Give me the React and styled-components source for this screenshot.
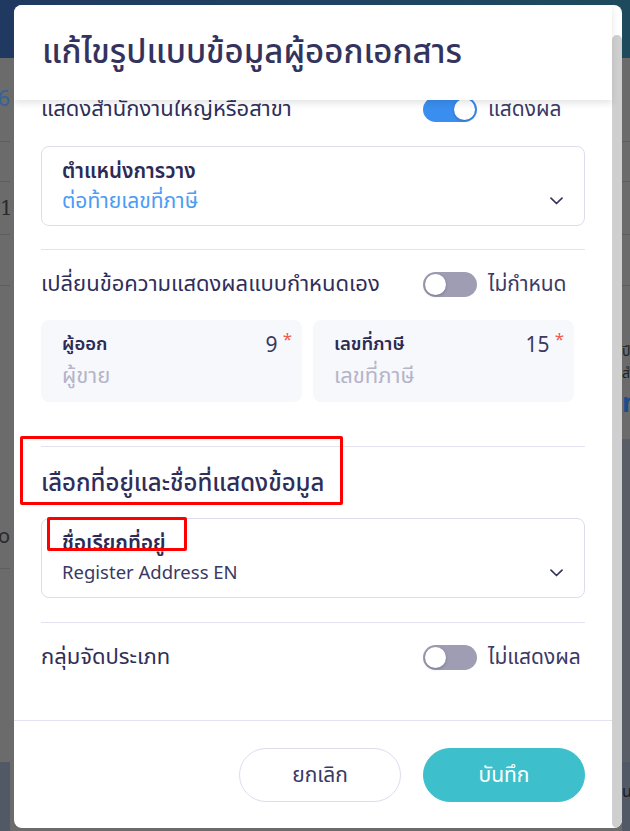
import React from "react";
import styled, { createGlobalStyle } from "styled-components";

const GlobalStyle = createGlobalStyle`
  html, body { margin: 0; padding: 0; }
  body {
    background: #6b6b6b;
    font-family: "Noto Sans Thai", "Noto Sans", "Liberation Sans", sans-serif;
  }
  * { box-sizing: border-box; }
`;

/* ---------- underlying page (dimmed by overlay) ---------- */
const Page = styled.div`
  position: relative;
  width: 630px;
  height: 831px;
  overflow: hidden;
  background: #6b6b6b;
  display: flex;
  flex-direction: column;
`;

const TopBar = styled.div`
  flex: none;
  height: 58px;
  background: linear-gradient(90deg, #1f3961 0%, #1f4361 55%, #1d4b5d 100%);
`;

const PageBody = styled.div`
  flex: 1;
  display: flex;
  justify-content: space-between;
`;

const Strip = styled.div`
  width: ${(p) => p.$w}px;
  display: flex;
  flex-direction: column;
  overflow: hidden;
`;

const StripCell = styled.div`
  flex: ${(p) => (p.$grow ? "1" : "none")};
  height: ${(p) => (p.$h ? `${p.$h}px` : "auto")};
  border-bottom: ${(p) => (p.$line ? "1px solid #5e5e5e" : "none")};
  background: ${(p) => p.$bg || "transparent"};
  display: flex;
  flex-direction: column;
  justify-content: ${(p) => p.$justify || "center"};
  align-items: ${(p) => p.$items || "flex-start"};
  gap: ${(p) => p.$gap || 0}px;
  padding: ${(p) => p.$pad || "0"};
  white-space: nowrap;
`;

const BgText = styled.span`
  font-size: ${(p) => p.$size || 20}px;
  line-height: ${(p) => p.$lh || 26}px;
  color: ${(p) => p.$color || "#262626"};
  font-weight: ${(p) => p.$weight || 400};
  font-family: ${(p) =>
    p.$serif ? '"DejaVu Serif", serif' : '"Noto Sans Thai", "DejaVu Sans", sans-serif'};
`;

/* ---------- modal ---------- */
const Modal = styled.div`
  position: absolute;
  left: 14px;
  top: 5px;
  width: 608px;
  height: 823px;
  background: #ffffff;
  border-radius: 8px;
  overflow: hidden;
  display: flex;
`;

const Main = styled.div`
  flex: 1;
  min-width: 0;
  display: flex;
  flex-direction: column;
`;

const Header = styled.header`
  flex: none;
  height: 95px;
  padding-left: 28px;
  display: flex;
  align-items: center;
  background: #ffffff;
  position: relative;
  z-index: 2;
  box-shadow: 0 3px 7px rgba(0, 0, 0, 0.11);
`;

const Title = styled.h2`
  margin: 0;
  font-size: 33px;
  font-weight: 500;
  color: #34335e;
  white-space: nowrap;
`;

const Scroller = styled.div`
  flex: 1;
  min-height: 0;
  overflow: hidden;
  display: flex;
  flex-direction: column;
  justify-content: flex-end;
`;

const Content = styled.div`
  flex: none;
  padding: 0 27px;
`;

const Section = styled.section`
  position: relative;
  display: flex;
  flex-direction: column;
  gap: ${(p) => p.$gap ?? 23}px;
  padding-top: 22px;
  padding-bottom: ${(p) => p.$bottom ?? 23}px;
  border-bottom: ${(p) => (p.$last ? "none" : "1px solid #e3e2ee")};
`;

const Row = styled.div`
  height: 25px;
  display: flex;
  align-items: center;
  justify-content: space-between;
`;

const RowLabel = styled.span`
  font-size: 22px;
  line-height: 30px;
  color: #2f2e5a;
  white-space: nowrap;
`;

const ToggleGroup = styled.div`
  width: 162px;
  display: flex;
  align-items: center;
  gap: 11px;
`;

const Toggle = styled.span`
  position: relative;
  flex: none;
  width: 54px;
  height: 25px;
  border-radius: 13px;
  background: ${(p) => (p.$on ? "#3a8ef0" : "#9e9db4")};
  &::after {
    content: "";
    position: absolute;
    top: 2px;
    left: ${(p) => (p.$on ? "31px" : "2px")};
    width: 21px;
    height: 21px;
    border-radius: 50%;
    background: #ffffff;
    box-shadow: 0 1px 3px rgba(40, 40, 70, 0.35);
  }
`;

const ToggleText = styled.span`
  font-size: 21px;
  line-height: 30px;
  color: #3b3a66;
  white-space: nowrap;
`;

const SelectBox = styled.div`
  position: relative;
  height: 80px;
  border: 1px solid #dddcec;
  border-radius: 8px;
  padding: 11px 21px 0 20px;
  display: flex;
  flex-direction: column;
`;

const FieldLabel = styled.span`
  position: relative;
  align-self: flex-start;
  font-size: 20.5px;
  line-height: 28px;
  font-weight: 600;
  color: #2c2b55;
  white-space: nowrap;
`;

const ValueRow = styled.div`
  display: flex;
  align-items: center;
  justify-content: space-between;
  height: 30px;
`;

const Value = styled.span`
  font-size: ${(p) => (p.$latin ? 18.5 : 21)}px;
  color: ${(p) => (p.$accent ? "#4a9cf5" : "#3a3962")};
  white-space: nowrap;
`;

const Chevron = () => (
  <svg width="13" height="8" viewBox="0 0 13 8" fill="none">
    <path
      d="M1 1.2 L6.5 6.5 L12 1.2"
      stroke="#35345e"
      strokeWidth="1.7"
      strokeLinecap="round"
      strokeLinejoin="round"
    />
  </svg>
);

const CardGrid = styled.div`
  display: grid;
  grid-template-columns: 261px 261px;
  gap: 11px;
`;

const Card = styled.div`
  height: 82px;
  border-radius: 8px;
  background: #f7f8fc;
  padding: 10px 10px 0 21px;
  display: flex;
  flex-direction: column;
`;

const CardTop = styled.div`
  display: flex;
  justify-content: space-between;
  align-items: flex-start;
  height: 32px;
`;

const CardLabel = styled.span`
  font-size: 18.5px;
  line-height: 28px;
  font-weight: 600;
  color: #2c2b55;
  white-space: nowrap;
`;

const Counter = styled.span`
  display: flex;
  align-items: flex-start;
  gap: 5px;
  font-size: 21px;
  line-height: 32px;
  color: #3a3962;
`;

const Star = styled.span`
  color: #f25a4c;
  font-size: 17px;
  line-height: 17px;
  margin-top: 2px;
`;

const Placeholder = styled.span`
  font-size: 22px;
  line-height: 30px;
  color: #b5b4c9;
  white-space: nowrap;
`;

const Heading = styled.h3`
  position: relative;
  align-self: flex-start;
  margin: 0;
  font-size: 24px;
  line-height: 30px;
  font-weight: 500;
  color: #2f2e5a;
  white-space: nowrap;
`;

const Annotation = styled.span`
  position: absolute;
  left: ${(p) => p.$l}px;
  top: ${(p) => p.$t}px;
  width: ${(p) => p.$w}px;
  height: ${(p) => p.$h}px;
  border: 3px solid #ff0000;
  border-radius: 2px;
  pointer-events: none;
`;

const Footer = styled.footer`
  flex: none;
  border-top: 1px solid #e3e2ee;
  padding: 27px 27px 26px;
  display: flex;
  justify-content: flex-end;
  gap: 22px;
`;

const Button = styled.button`
  width: 162px;
  height: 54px;
  border-radius: 27px;
  font-family: inherit;
  font-size: 21px;
  cursor: pointer;
  border: 1px solid ${(p) => (p.$primary ? "#3ec0cc" : "#dddcec")};
  background: ${(p) => (p.$primary ? "#3ec0cc" : "#ffffff")};
  color: ${(p) => (p.$primary ? "#ffffff" : "#3b3a66")};
`;

const ScrollTrack = styled.div`
  flex: none;
  width: 10px;
  padding-top: 30px;
  display: flex;
  flex-direction: column;
`;

const Thumb = styled.div`
  flex: 1;
  background: #cfcfcf;
  border-radius: 5px;
`;

export default function App() {
  return (
    <>
      <GlobalStyle />
      <Page>
        <TopBar />
        <PageBody>
          <Strip $w={10}>
            <StripCell $h={84} $line $items="flex-end">
              <BgText $color="#34629a" $size={22}>2566</BgText>
            </StripCell>
            <StripCell $h={40} $line />
            <StripCell $h={53} $line>
              <BgText $serif $color="#2a2a2a" $size={20}>1</BgText>
            </StripCell>
            <StripCell $h={51} $line />
            <StripCell $h={283} $line $justify="flex-end" $pad="0 0 18px 0" $items="flex-end">
              <BgText $color="#2a2a2a" $size={20}>o</BgText>
            </StripCell>
            <StripCell $grow />
            <StripCell $h={69} $bg="#525966" />
          </Strip>
          <Strip $w={8}>
            <StripCell $h={84} $line />
            <StripCell $h={40} $line />
            <StripCell $h={53} $line />
            <StripCell $h={51} $line />
            <StripCell $h={153} $justify="flex-start" $pad="56px 0 0 0" $gap={2}>
              <BgText $size={14} $lh={20} $color="#222">ปี</BgText>
              <BgText $size={14} $lh={20} $color="#222">สำ</BgText>
              <BgText $size={26} $lh={36} $weight={700} $color="#1c4e8c">n</BgText>
            </StripCell>
            <StripCell $grow $bg="#5a5e67" />
            <StripCell $h={69} $bg="#525966" $pad="0 0 10px 0">
              <BgText $size={16} $lh={24} $color="#1e1e1e">นเ</BgText>
            </StripCell>
          </Strip>
        </PageBody>

        <Modal role="dialog">
          <Main>
            <Header>
              <Title>แก้ไขรูปแบบข้อมูลผู้ออกเอกสาร</Title>
            </Header>
            <Scroller>
              <Content>
                <Section $gap={24}>
                  <Row>
                    <RowLabel>แสดงสำนักงานใหญ่หรือสาขา</RowLabel>
                    <ToggleGroup>
                      <Toggle $on />
                      <ToggleText>แสดงผล</ToggleText>
                    </ToggleGroup>
                  </Row>
                  <SelectBox>
                    <FieldLabel>ตำแหน่งการวาง</FieldLabel>
                    <ValueRow>
                      <Value $accent>ต่อท้ายเลขที่ภาษี</Value>
                      <Chevron />
                    </ValueRow>
                  </SelectBox>
                </Section>

                <Section $bottom={44}>
                  <Row>
                    <RowLabel>เปลี่ยนข้อความแสดงผลแบบกำหนดเอง</RowLabel>
                    <ToggleGroup>
                      <Toggle />
                      <ToggleText>ไม่กำหนด</ToggleText>
                    </ToggleGroup>
                  </Row>
                  <CardGrid>
                    <Card>
                      <CardTop>
                        <CardLabel>ผู้ออก</CardLabel>
                        <Counter>
                          9<Star>*</Star>
                        </Counter>
                      </CardTop>
                      <Placeholder>ผู้ขาย</Placeholder>
                    </Card>
                    <Card>
                      <CardTop>
                        <CardLabel>เลขที่ภาษี</CardLabel>
                        <Counter>
                          15<Star>*</Star>
                        </Counter>
                      </CardTop>
                      <Placeholder>เลขที่ภาษี</Placeholder>
                    </Card>
                  </CardGrid>
                </Section>

                <Section $gap={19} $bottom={24}>
                  <Heading>
                    เลือกที่อยู่และชื่อที่แสดงข้อมูล
                    <Annotation $l={-21} $t={-33} $w={323} $h={69} />
                  </Heading>
                  <SelectBox>
                    <FieldLabel>
                      ชื่อเรียกที่อยู่
                      <Annotation $l={-15} $t={-13} $w={140} $h={34} />
                    </FieldLabel>
                    <ValueRow>
                      <Value $latin>Register Address EN</Value>
                      <Chevron />
                    </ValueRow>
                  </SelectBox>
                </Section>

                <Section $last $bottom={50}>
                  <Row>
                    <RowLabel>กลุ่มจัดประเภท</RowLabel>
                    <ToggleGroup>
                      <Toggle />
                      <ToggleText>ไม่แสดงผล</ToggleText>
                    </ToggleGroup>
                  </Row>
                </Section>
              </Content>
              <Footer>
                <Button>ยกเลิก</Button>
                <Button $primary>บันทึก</Button>
              </Footer>
            </Scroller>
          </Main>
          <ScrollTrack>
            <Thumb />
          </ScrollTrack>
        </Modal>
      </Page>
    </>
  );
}
